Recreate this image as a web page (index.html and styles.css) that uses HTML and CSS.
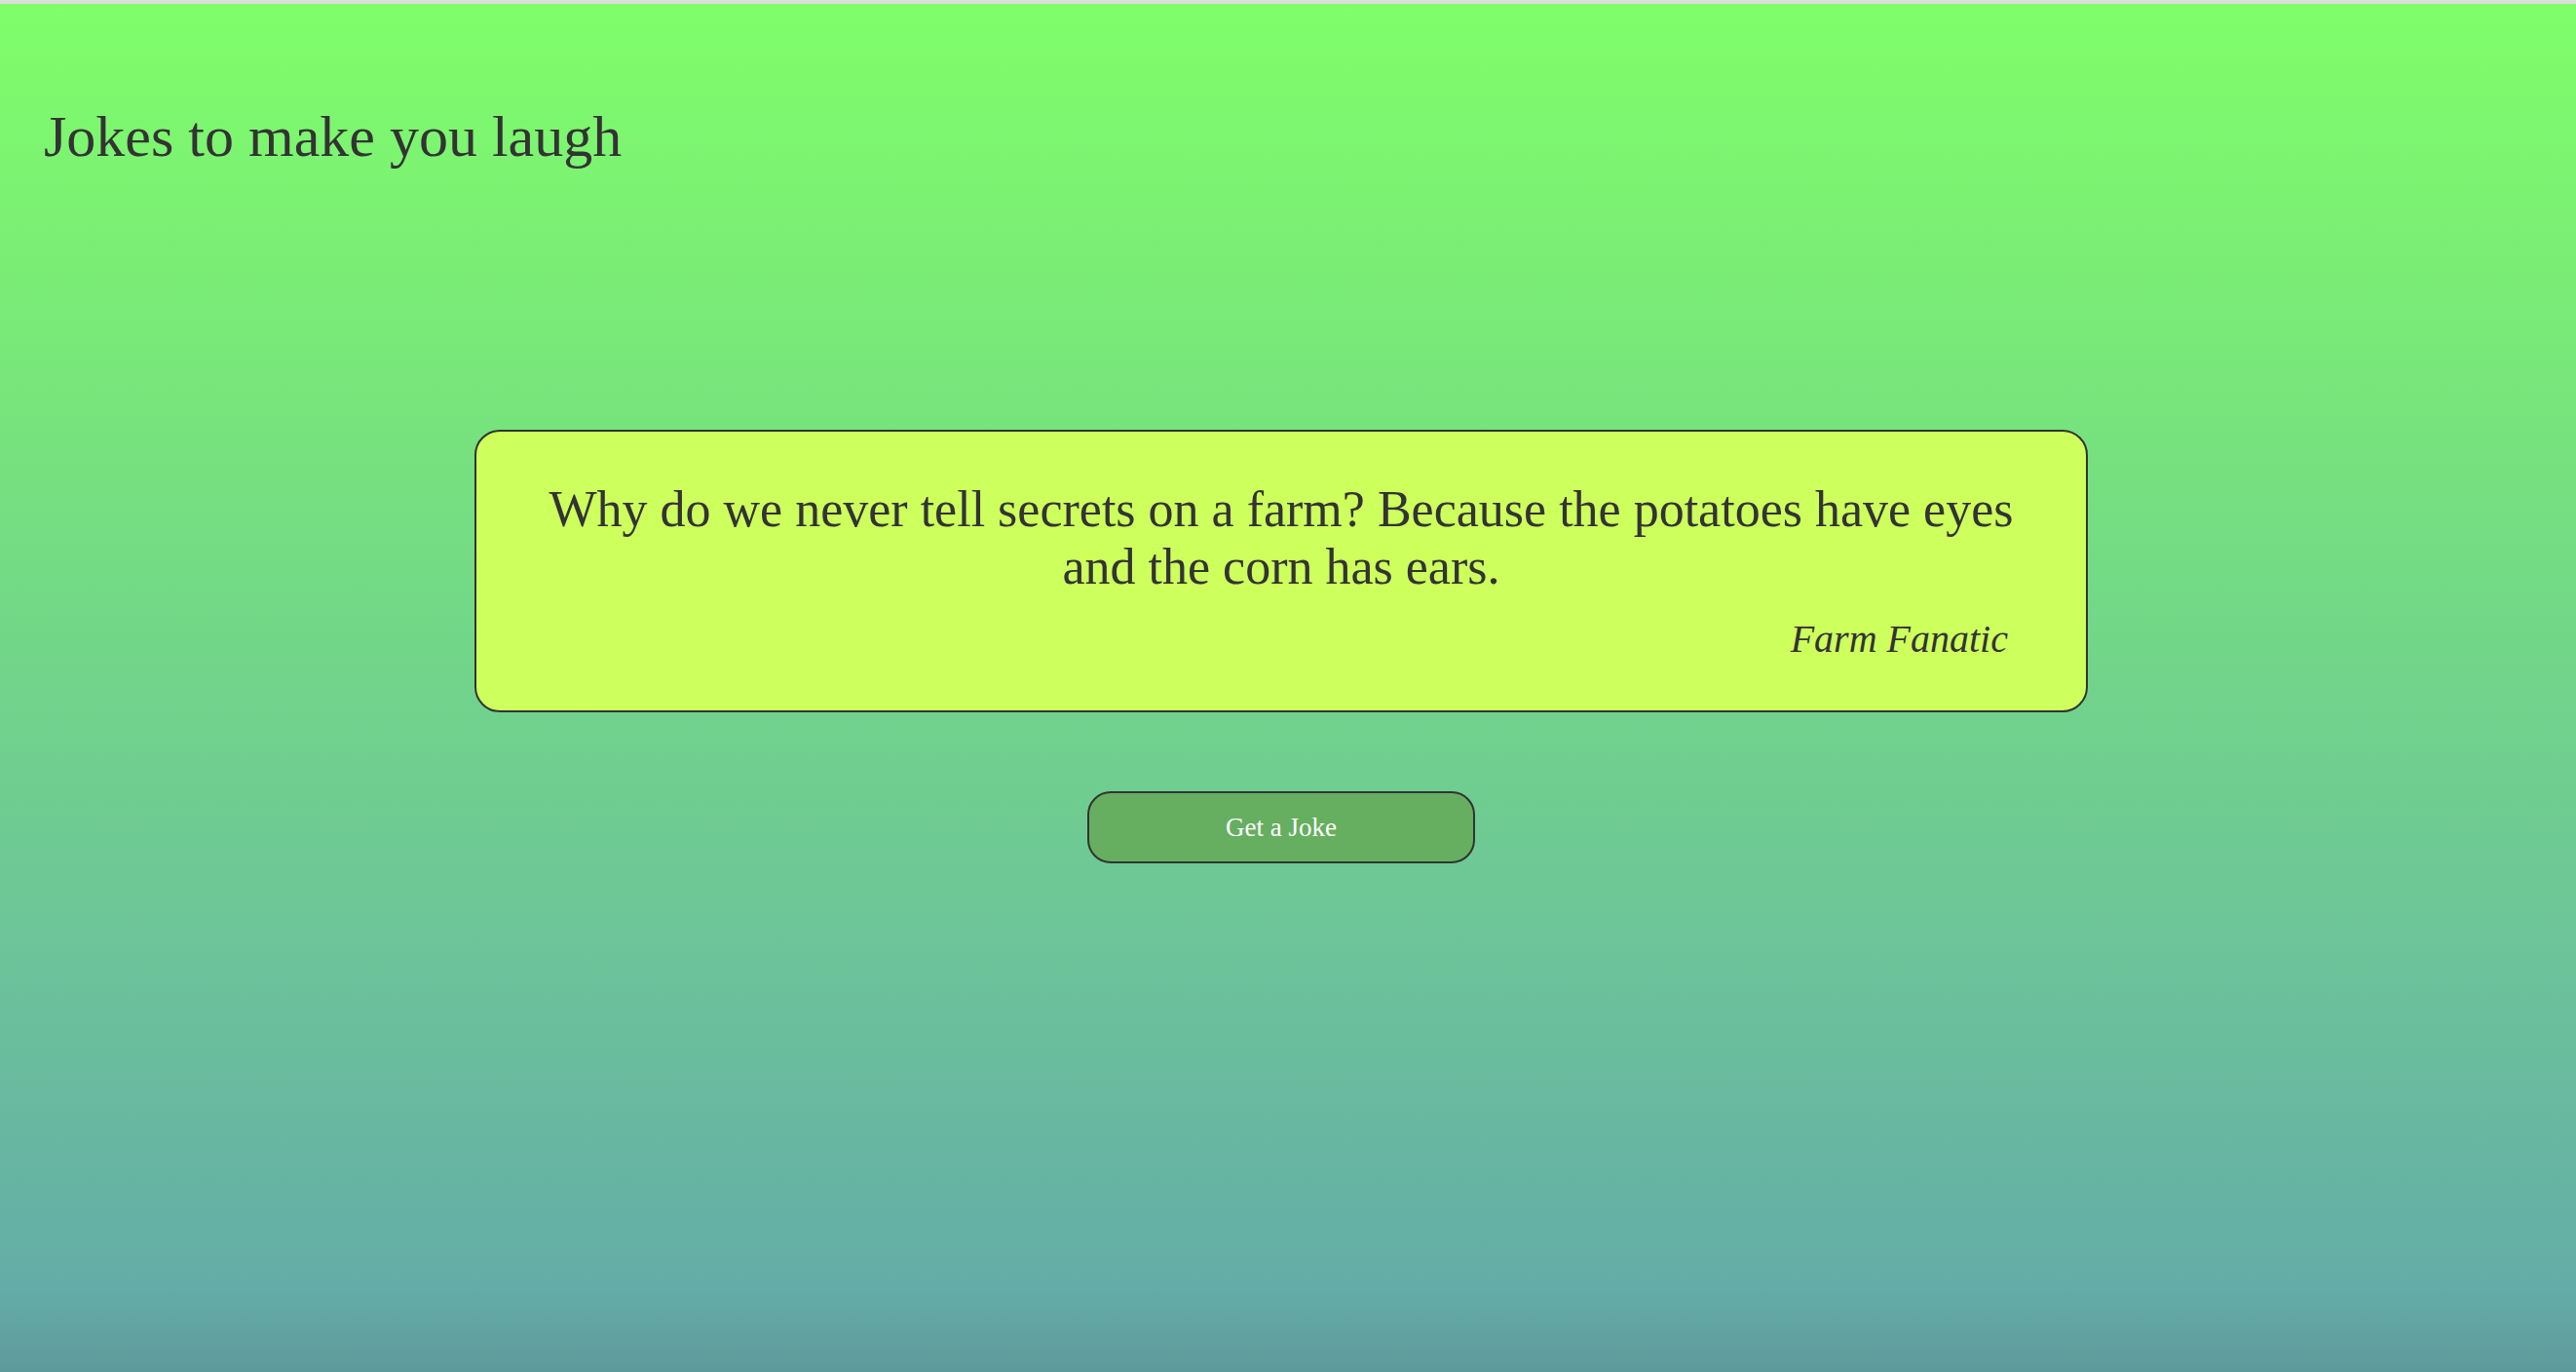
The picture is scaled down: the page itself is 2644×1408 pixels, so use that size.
FILE: index.html
```html
<!DOCTYPE html>
<html lang="en">
<head>
<meta charset="utf-8">
<title>Jokes to make you laugh</title>
<link rel="stylesheet" href="styles.css">
</head>
<body>
<div class="page">
  <h1 class="title">Jokes to make you laugh</h1>
  <div class="card">
    <p class="joke">Why do we never tell secrets on a farm? Because the potatoes have eyes and the corn has ears.</p>
    <p class="author">Farm Fanatic</p>
  </div>
  <button class="btn" type="button">Get a Joke</button>
</div>
</body>
</html>
```
FILE: styles.css
```css
html, body {
  margin: 0;
  padding: 0;
  height: 100%;
}
body {
  border-top: 4px solid #dcdcdc;
  box-sizing: border-box;
  background: linear-gradient(to bottom, #80fe6a 0%, #77e47c 30%, #6cc39a 70%, #64aca7 94%, #5f9a9b 100%);
  font-family: "Liberation Serif", "Times New Roman", serif;
  color: #333333;
  min-height: 100vh;
}
.page {
  display: flex;
  flex-direction: column;
  align-items: center;
  padding-right: 14px;
}
.title {
  align-self: flex-start;
  margin: 102px 0 0 45px;
  font-size: 60px;
  font-weight: normal;
  line-height: normal;
}
.card {
  margin-top: 266px;
  width: 1656px;
  box-sizing: border-box;
  padding: 50px 70px 50px 70px;
  background: #cdff5d;
  border: 2px solid #333333;
  border-radius: 26px;
}
.joke {
  margin: 0;
  text-align: center;
  font-size: 52px;
  line-height: normal;
}
.author {
  margin: 21px 10px 0 0;
  text-align: right;
  font-style: italic;
  font-size: 40px;
  line-height: normal;
}
.btn {
  margin-top: 81px;
  width: 398px;
  height: 74px;
  box-sizing: border-box;
  background: #66ae60;
  border: 2px solid #333333;
  border-radius: 24px;
  color: #ffffff;
  font-family: "Liberation Serif", "Times New Roman", serif;
  font-size: 27px;
  padding: 0;
}
```
